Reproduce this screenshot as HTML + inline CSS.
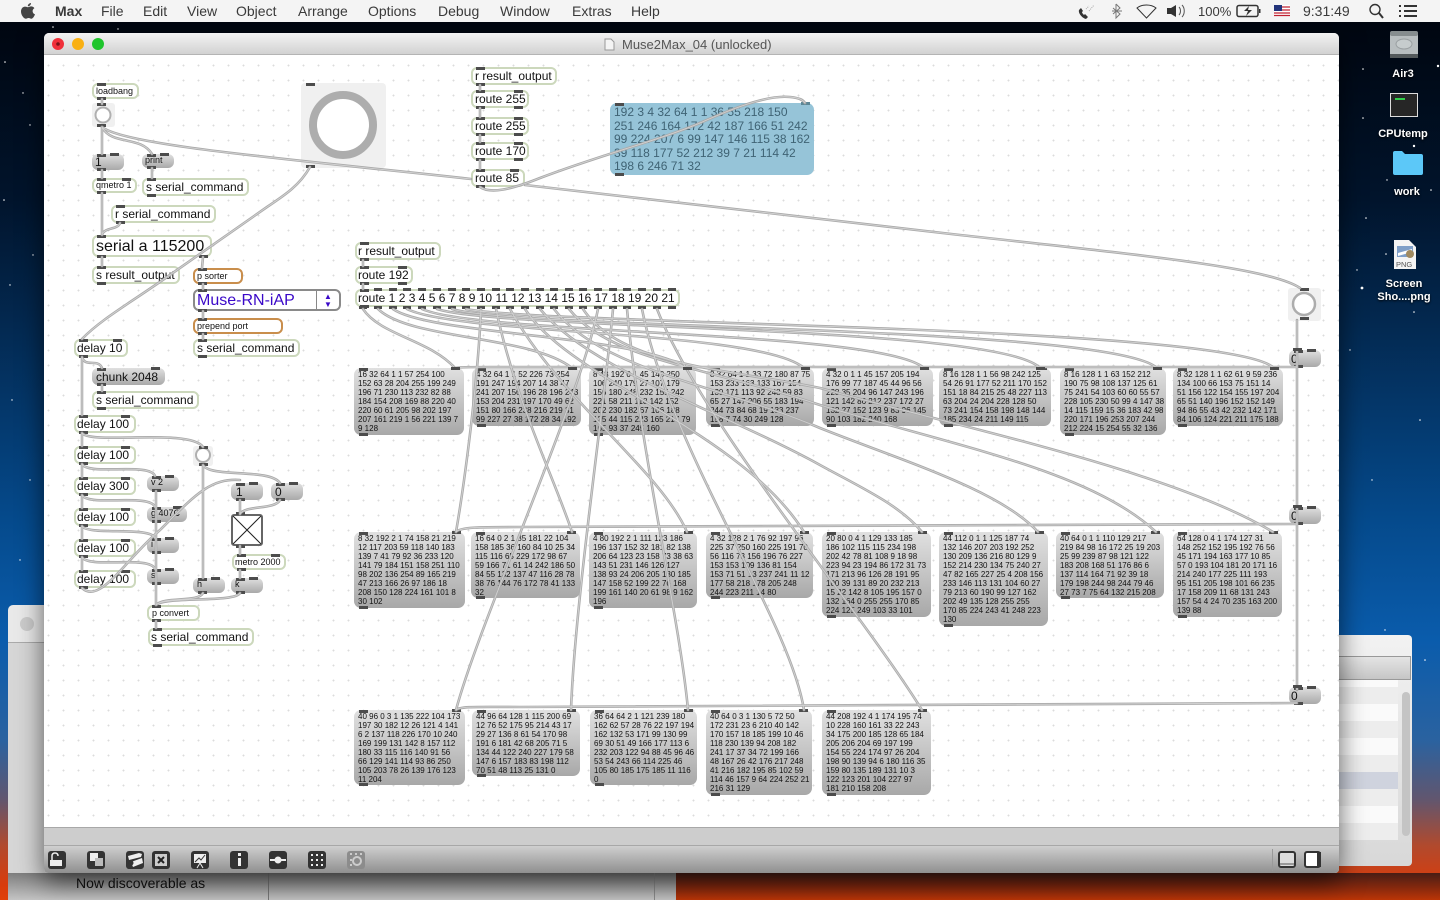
<!DOCTYPE html>
<html><head><meta charset="utf-8"><title>Muse2Max_04</title>
<style>
html,body{margin:0;padding:0;width:1440px;height:900px;overflow:hidden;font-family:"Liberation Sans",sans-serif}
#bg{position:absolute;left:0;top:0;width:1440px;height:900px;background:linear-gradient(180deg,#000610 22px,#01142c 200px,#03284f 320px,#054a8c 520px,#0a5cac 640px,#2a62a0 740px,#62566e 800px,#b04a2e 845px,#d83c0c 885px,#e04008 900px)}
#menu{position:absolute;left:0;top:0;width:1440px;height:22px;background:#f4f4f4;font-size:14px;color:#3a3a3a}
#menu span{position:absolute;top:3px;line-height:17px;white-space:nowrap}
.dt{position:absolute;color:#fff;font-weight:bold;font-size:11px;text-align:center;line-height:13px;text-shadow:0 1px 2px #000;white-space:nowrap}
#bw1{position:absolute;left:8px;top:605px;width:668px;height:295px;background:#e9e9e9;border-radius:5px 5px 0 0}
#bw1 .l{position:absolute;left:0;top:37px;width:100%;height:1px;background:#aaa}
#bw1 .c{position:absolute;left:12px;top:12px;width:14px;height:14px;border-radius:50%;background:#ccc}
#bw1 .lo{position:absolute;left:0;top:38px;width:100%;height:257px;background:#d6d6d6}
#bw2{position:absolute;left:1300px;top:635px;width:112px;height:231px;background:linear-gradient(#f2f2f2,#d8d8d8);border-radius:0 4px 4px 0}
#shade{position:absolute;left:8px;top:873px;width:668px;height:27px;background:linear-gradient(#7e7e7e,#c4c4c4)}
#orshade{position:absolute;left:676px;top:873px;width:764px;height:27px;background:linear-gradient(rgba(40,20,20,.8),rgba(40,10,0,.2))}
#win{position:absolute;left:44px;top:33px;width:1295px;height:840px;background:#fff;border-radius:5px 5px 4px 4px;box-shadow:0 8px 26px rgba(0,0,0,.6);overflow:hidden}
#tb{position:absolute;left:0;top:0;width:1295px;height:22px;background:linear-gradient(#f3f3f3,#d2d2d2);border-bottom:1px solid #b4b4b4;box-sizing:border-box}
#tb div.t{position:absolute;left:578px;top:3px;font-size:13px;line-height:17px;color:#555}
#cv{position:absolute;left:0;top:22px;width:1295px;height:772px;background-color:#fff;background-image:radial-gradient(circle,#dcdcdc .8px,rgba(255,255,255,0) 1.1px);background-size:15px 15px;background-position:-3px 3px}
#bar1{position:absolute;left:0;top:794px;width:1295px;height:19px;background:#cdcdcd;border-top:1px solid #a8a8a8;border-bottom:1px solid #a8a8a8;box-sizing:border-box}
#bar2{position:absolute;left:0;top:813px;width:1295px;height:27px;background:linear-gradient(#cfcfcf,#8f8f8f 100%)}
#obj{position:absolute;left:0;top:0;width:1440px;height:900px}
.o,.m{position:absolute;box-sizing:border-box;white-space:nowrap;color:#111}
.o{background:#fff;border:2px solid #ccd8bc;border-radius:6px;font-size:12px;padding-left:2px}
.m{background:linear-gradient(#e0e0e0,#a9a9a9);border-radius:6px;font-size:12px;padding-left:4px}
.o::before,.m::before{content:"";position:absolute;left:3px;top:-2px;width:9px;height:3px;background:#4c4c4c}
.o::after,.m::after{content:"";position:absolute;left:3px;bottom:-3px;width:9px;height:3px;background:#4c4c4c}
.m::before{left:5px;top:0}.m::after{left:5px;bottom:-1px}
.o i,.m i{position:absolute;width:9px;height:3px;background:#4c4c4c;display:block}
.s{font-size:9px}
.p1{padding-left:1px}
.n{font-size:8px;line-height:9px;padding:2px 0 0 4px;color:#111;background:linear-gradient(#e0e0e0,#a8a8a8);border-radius:7px}
.n i{right:4px;top:-1px}
#ov{position:absolute;left:0;top:0}
</style></head><body>
<div id="bg"></div>
<svg style="position:absolute;left:0;top:0" width="1440" height="900" fill="#fff">
<circle cx="53" cy="27" r=".8"/><circle cx="118" cy="29" r=".7"/><circle cx="5" cy="62" r=".8"/><circle cx="23" cy="93" r=".7"/><circle cx="30" cy="125" r=".7"/><circle cx="4" cy="200" r=".8"/><circle cx="33" cy="255" r=".7"/><circle cx="10" cy="285" r=".7"/><circle cx="1363" cy="69" r=".8"/><circle cx="1438" cy="66" r="1.2"/><circle cx="1363" cy="118" r=".8"/><circle cx="1414" cy="146" r="1.2"/><circle cx="1387" cy="180" r=".7"/><circle cx="1431" cy="190" r=".8"/><circle cx="1366" cy="218" r=".8"/><circle cx="1386" cy="254" r=".8"/><circle cx="1357" cy="270" r=".7"/><circle cx="1362" cy="288" r="1.4"/><circle cx="1414" cy="312" r=".8"/><circle cx="1350" cy="350" r=".7"/><circle cx="1420" cy="420" r=".8"/><circle cx="1372" cy="480" r=".7"/><circle cx="12" cy="400" r=".7"/><circle cx="30" cy="480" r=".7"/><circle cx="20" cy="560" r=".7"/><circle cx="1425" cy="660" r=".8"/><circle cx="1385" cy="630" r=".7"/>
</svg>
<div id="bw1"><div class="c"></div><div class="lo"></div><div class="l"></div></div>
<div id="shade"></div>
<div style="position:absolute;left:268px;top:873px;width:1px;height:27px;background:#777"></div>
<div style="position:absolute;left:654px;top:873px;width:1px;height:27px;background:#888"></div>
<div id="orshade"></div>
<div style="position:absolute;left:76px;top:875px;font-size:14px;line-height:17px;color:#111;white-space:nowrap">Now discoverable as</div>
<div id="bw2">
<div style="position:absolute;left:0;top:21px;width:111px;height:24px;background:linear-gradient(#e4e4e4,#c6c6c6);border:1px solid #999;border-width:1px 1px 1px 0;box-sizing:border-box"></div>
<div style="position:absolute;left:0;top:45px;width:98px;height:160px;background:#fafafa"></div>
<div style="position:absolute;left:0;top:52px;width:98px;height:153px;background:repeating-linear-gradient(#ededed 0,#ededed 17px,#fafafa 17px,#fafafa 34px)"></div>
<div style="position:absolute;left:0;top:137px;width:98px;height:17px;background:#cfd3de"></div>
<div style="position:absolute;left:102px;top:57px;width:8px;height:144px;border-radius:4px;background:#c4c4c4"></div>
</div>
<div id="win">
<div id="tb">
<svg style="position:absolute;left:0;top:0" width="600" height="22">
<circle cx="14" cy="11" r="6" fill="#f0303a"/><circle cx="14" cy="11" r="1.8" fill="#7a1218"/><circle cx="34" cy="11" r="6" fill="#f9b013"/><circle cx="54" cy="11" r="6" fill="#1fc52c"/>
<path d="M561 6h6l3 3v8h-9z" fill="#f4f4f4" stroke="#999"/>
</svg>
<div class="t">Muse2Max_04 (unlocked)</div></div>
<div id="cv"></div>
<div id="bar1"></div><div id="bar2"></div>
</div>
<div id="menu">
<svg style="position:absolute;left:20px;top:2px" width="16" height="18" viewBox="0 0 16 18"><path fill="#444" d="M11 1c0 2-1.6 3.4-3.2 3.3C7.700 2.600 9.300 1.100 11 1zM8 5.200c.9 0 1.800-.8 3.200-.8 1.200 0 2.500.6 3.200 1.700-2.700 1.600-2.200 5.300.6 6.300-.7 1.800-2.100 4.300-3.600 4.300-1 0-1.500-.7-2.800-.7s-1.800.7-2.800.7C3.800 16.700 1 13 1 9.500 1 6.400 3 4.600 5 4.600c1.300 0 2.200.6 3 .6z"/></svg>
<span style="left:55px;font-weight:bold">Max</span><span style="left:101px">File</span><span style="left:143px">Edit</span><span style="left:187px">View</span><span style="left:236px">Object</span><span style="left:298px">Arrange</span><span style="left:368px">Options</span><span style="left:438px">Debug</span><span style="left:500px">Window</span><span style="left:572px">Extras</span><span style="left:631px">Help</span>
<span style="left:1198px;font-size:13px">100%</span><span style="left:1303px">9:31:49</span>
<svg style="position:absolute;left:1070px;top:0" width="370" height="22" fill="none" stroke="#333">
<path d="M9 10c-1 3 3 8 7 9l2-2-3-3-1 1c-1-1-2-2-2-3l1-1-2-3z" fill="#333" stroke="none"/><path d="M16 9l3-3M19 11l5-6" stroke="#aaa" stroke-dasharray="1 1"/>
<path d="M46 4v14l4-4-7-6M46 4l4 4-7 6M42 11h10" stroke="#777"/>
<path d="M67 8c5-4 14-4 19 0l-9.500 10z" stroke="#333" fill="none"/>
<path d="M97 8h4l5-3v12l-5-3h-4z" fill="#333" stroke="none"/><path d="M109 7c2 2 2 6 0 8M112 5c3 3 3 9 0 12" stroke="#555"/>
<rect x="167" y="5.500" width="21" height="11" rx="2" stroke="#333" stroke-width="1.500"/><path d="M179 6l-5 5h4l-2 5 6-6h-4z" fill="#333" stroke="none"/><rect x="189" y="9" width="1.500" height="4" fill="#333" stroke="none"/>
<rect x="204" y="5" width="16" height="11" fill="#fff" stroke="none"/><path d="M204 7h16M204 10h16M204 13h16M204 15.500h16" stroke="#c02030" stroke-width="1.300"/><rect x="204" y="5" width="8" height="6" fill="#22337a" stroke="none"/>
<circle cx="305" cy="9.500" r="5" stroke-width="1.400"/><path d="M309 13l4 5" stroke-width="2"/>
<path d="M329 6h2M329 11h2M329 16h2M334 6h13M334 11h13M334 16h13" stroke-width="2"/>
</svg>
</div>
<svg style="position:absolute;left:1389px;top:29px" width="32" height="32"><rect x="1" y="2" width="28" height="27" rx="3" fill="#b8bec0"/><rect x="1" y="2" width="28" height="5" rx="2" fill="#868d8f"/><ellipse cx="15" cy="15" rx="8" ry="5" fill="#c6cccd" stroke="#9aa0a2"/><rect x="1" y="25" width="28" height="4" fill="#545a5c"/></svg>
<div class="dt" style="left:1383px;top:68px;width:40px">Air3</div>
<div style="position:absolute;left:1390px;top:93px;width:28px;height:24px;background:#262626;border:1px solid #ddd;box-sizing:border-box"><div style="margin:4px;width:10px;height:2px;background:#2fce4a"></div></div>
<div class="dt" style="left:1373px;top:127px;width:60px;margin-top:1px">CPUtemp</div>
<svg style="position:absolute;left:1392px;top:150px" width="32" height="26"><path d="M1 3q0-2 2-2h7l3 3h16q2 0 2 2v17q0 2-2 2H3q-2 0-2-2z" fill="#5cc8f8"/></svg>
<div class="dt" style="left:1387px;top:186px;width:40px">work</div>
<svg style="position:absolute;left:1393px;top:239px" width="24" height="31"><path d="M1 1h15l7 7v22H1z" fill="#f4f4f4"/><rect x="4" y="7" width="16" height="11" fill="#7f9fc8"/><path d="M5 14l14-4v3L5 17z" fill="#fff"/><circle cx="17" cy="15" r="4" fill="#a08a60"/><text x="3" y="28" font-size="7.500" font-family="Liberation Sans" fill="#555">PNG</text></svg>
<div class="dt" style="left:1374px;top:278px;width:60px">Screen<br>Sho....png</div>

<div id="obj">
<div class="o s" style="left:92px;top:83px;width:47px;height:16px;line-height:12px">loadbang</div>
<div class="m" style="left:92px;top:154px;width:32px;height:16px;line-height:17px;font-size:12px;padding-left:3px"><i style="right:5px;top:-1px"></i>1</div>
<div class="m s" style="left:142px;top:154px;width:32px;height:14px;line-height:12px;padding-left:3px;font-size:9px"><i style="right:5px;top:-1px"></i>print</div>
<div class="o s" style="left:92px;top:178px;width:45px;height:15px;line-height:11px"><i style="right:4px;top:-2px"></i>qmetro 1</div>
<div class="o" style="left:142px;top:178px;width:107px;height:18px;line-height:14px">s serial_command</div>
<div class="o" style="left:111px;top:205px;width:105px;height:18px;line-height:14px">r serial_command</div>
<div class="o" style="left:92px;top:235px;width:120px;height:22px;line-height:19px;font-size:16px"><i style="left:105px;top:18px"></i>serial a 115200</div>
<div class="o" style="left:92px;top:266px;width:88px;height:18px;line-height:14px">s result_output</div>
<div class="o s" style="left:193px;top:268px;width:50px;height:16px;line-height:12px;border-color:#c98e4c">p sorter</div>
<div class="o" style="left:193px;top:289px;width:148px;height:22px;line-height:19px;font-size:16px;color:#3a08c8;border-color:#8a8a8a">Muse-RN-iAP<div style="position:absolute;left:121px;top:0;width:1px;height:18px;background:#888"></div><div style="position:absolute;left:129px;top:2px;font-size:8px;line-height:7px;color:#3a08c8">▲</div><div style="position:absolute;left:129px;top:10px;font-size:8px;line-height:7px;color:#3a08c8">▼</div></div>
<div class="o s" style="left:193px;top:318px;width:90px;height:16px;line-height:12px;border-color:#c98e4c">prepend port</div>
<div class="o" style="left:193px;top:339px;width:107px;height:18px;line-height:14px">s serial_command</div>
<div class="o p1" style="left:74px;top:339px;width:54px;height:18px;line-height:14px"><i style="right:4px;top:-2px"></i>delay 10</div>
<div class="m" style="left:92px;top:368px;width:73px;height:17px;line-height:18px"><i style="right:5px;top:-1px"></i>chunk 2048</div>
<div class="o" style="left:92px;top:391px;width:107px;height:18px;line-height:14px">s serial_command</div>
<div class="o p1" style="left:74px;top:415px;width:62px;height:18px;line-height:14px"><i style="right:4px;top:-2px"></i>delay 100</div>
<div class="o p1" style="left:74px;top:446px;width:62px;height:18px;line-height:14px"><i style="right:4px;top:-2px"></i>delay 100</div>
<div class="o p1" style="left:74px;top:477px;width:62px;height:18px;line-height:14px"><i style="right:4px;top:-2px"></i>delay 300</div>
<div class="o p1" style="left:74px;top:508px;width:62px;height:18px;line-height:14px"><i style="right:4px;top:-2px"></i>delay 100</div>
<div class="o p1" style="left:74px;top:539px;width:62px;height:18px;line-height:14px"><i style="right:4px;top:-2px"></i>delay 100</div>
<div class="o p1" style="left:74px;top:570px;width:62px;height:18px;line-height:14px"><i style="right:4px;top:-2px"></i>delay 100</div>
<div class="m s" style="left:147px;top:476px;width:32px;height:15px;line-height:13px;font-size:9px;padding-left:4px"><i style="right:5px;top:-1px"></i>v 2</div>
<div class="m s" style="left:147px;top:507px;width:40px;height:15px;line-height:13px;font-size:9px;padding-left:4px"><i style="right:5px;top:-1px"></i>g 407C</div>
<div class="m s" style="left:147px;top:538px;width:32px;height:15px;line-height:13px;font-size:9px;padding-left:4px"><i style="right:5px;top:-1px"></i>i</div>
<div class="m s" style="left:147px;top:569px;width:32px;height:15px;line-height:13px;font-size:9px;padding-left:4px"><i style="right:5px;top:-1px"></i>s</div>
<div class="m" style="left:231px;top:483px;width:32px;height:17px;line-height:18px;padding-left:5px"><i style="right:5px;top:-1px"></i>1</div>
<div class="m" style="left:271px;top:483px;width:32px;height:17px;line-height:18px;padding-left:4px"><i style="right:5px;top:-1px"></i>0</div>
<div class="o s p1" style="left:232px;top:554px;width:54px;height:16px;line-height:12px"><i style="right:4px;top:-2px"></i>metro 2000</div>
<div class="m s" style="left:193px;top:578px;width:32px;height:15px;line-height:13px;font-size:9px;padding-left:4px"><i style="right:5px;top:-1px"></i>h</div>
<div class="m s" style="left:231px;top:578px;width:32px;height:15px;line-height:13px;font-size:9px;padding-left:4px"><i style="right:5px;top:-1px"></i>k</div>
<div class="o s" style="left:147px;top:605px;width:53px;height:16px;line-height:12px;padding-left:3px">p convert</div>
<div class="o p1" style="left:148px;top:628px;width:106px;height:18px;line-height:14px">s serial_command</div>
<div class="o" style="left:471px;top:67px;width:86px;height:18px;line-height:14px">r result_output</div>
<div class="o" style="left:471px;top:90px;width:58px;height:18px;line-height:14px"><i style="right:4px;top:-2px"></i><i style="right:4px;bottom:-3px"></i>route 255</div>
<div class="o" style="left:471px;top:117px;width:58px;height:18px;line-height:14px"><i style="right:4px;top:-2px"></i><i style="right:4px;bottom:-3px"></i>route 255</div>
<div class="o" style="left:471px;top:142px;width:58px;height:18px;line-height:14px"><i style="right:4px;top:-2px"></i><i style="right:4px;bottom:-3px"></i>route 170</div>
<div class="o" style="left:471px;top:169px;width:54px;height:18px;line-height:14px"><i style="right:4px;top:-2px"></i>route 85</div>
<div class="o p1" style="left:355px;top:242px;width:86px;height:18px;line-height:14px">r result_output</div>
<div class="o p1" style="left:355px;top:266px;width:58px;height:18px;line-height:14px"><i style="right:4px;top:-2px"></i><i style="right:4px;bottom:-3px"></i>route 192</div>
<div class="o p1" style="left:355px;top:289px;width:325px;height:18px;line-height:14px">route 1 2 3 4 5 6 7 8 9 10 11 12 13 14 15 16 17 18 19 20 21</div>

<div class="m" style="left:610px;top:103px;width:204px;height:72px;background:#96c4d8;font-size:12px;line-height:13.500px;padding:3px 0 0 4px;color:#3f6374;border-radius:7px"><i style="right:4px;top:-1px;background:#5d8796"></i>192 3 4 32 64 1 1 36 55 218 150<br>251 246 164 172 42 187 166 51 242<br>99 224 207 6 99 147 146 115 38 162<br>39 118 177 52 212 39 7 21 114 42<br>198 6 246 71 32</div>

<div class="m n" style="left:354px;top:368px;width:110px;height:67px"><i></i>16 32 64 1 1 57 254 100<br>152 63 28 204 255 199 249<br>196 71 230 113 232 82 88<br>184 154 208 169 88 220 40<br>220 60 61 205 98 202 197<br>207 161 219 1 56 221 139 7<br>9 128</div>
<div class="m n" style="left:472px;top:368px;width:109px;height:58px"><i></i>4 32 64 1 1 52 226 73 254<br>191 247 194 207 14 38 47<br>241 207 156 196 28 196 243<br>153 204 231 197 170 49 62<br>151 80 166 238 216 219 31<br>99 227 27 38 172 28 34 192</div>
<div class="m n" style="left:589px;top:368px;width:107px;height:67px"><i></i>8 48 192 0 1 45 140 250<br>106 240 179 27 107 179<br>156 180 248 232 155 242<br>221 58 211 118 142 152<br>202 230 182 67 106 188<br>125 44 115 223 165 217 79<br>165 93 37 245 160</div>
<div class="m n" style="left:706px;top:368px;width:108px;height:58px"><i></i>8 32 64 1 1 33 72 180 87 75<br>153 233 163 133 167 154<br>130 171 113 92 248 59 83<br>65 27 147 206 55 183 194<br>244 73 84 68 19 133 237<br>158 7 74 30 249 128</div>
<div class="m n" style="left:822px;top:368px;width:111px;height:58px"><i></i>4 32 0 1 1 45 157 205 194<br>176 99 77 187 45 44 96 56<br>228 35 204 96 147 243 196<br>121 142 86 212 237 172 27<br>132 27 152 123 9 83 96 145<br>90 103 182 240 168</div>
<div class="m n" style="left:939px;top:368px;width:112px;height:58px"><i></i>8 16 128 1 1 56 98 242 125<br>54 26 91 177 52 211 170 152<br>151 18 84 215 25 48 227 113<br>63 204 24 204 228 128 50<br>73 241 154 158 198 148 144<br>185 234 24 211 149 115</div>
<div class="m n" style="left:1060px;top:368px;width:106px;height:67px"><i></i>8 16 128 1 1 63 152 212<br>190 75 98 108 137 125 61<br>75 241 54 103 60 60 55 57<br>228 105 230 50 99 4 147 38<br>14 115 159 15 36 183 42 98<br>220 171 196 253 207 244<br>212 224 15 254 55 32 136</div>
<div class="m n" style="left:1173px;top:368px;width:110px;height:58px"><i></i>8 32 128 1 1 62 61 9 59 236<br>134 100 66 153 75 151 14<br>51 156 122 154 155 197 204<br>65 51 140 196 152 152 149<br>94 86 55 43 42 232 142 171<br>84 106 124 221 211 175 188</div>

<div class="m n" style="left:354px;top:532px;width:111px;height:76px"><i></i>8 32 192 2 1 74 158 21 219<br>12 117 203 59 118 140 183<br>139 7 41 79 92 36 233 120<br>141 79 184 151 158 251 110<br>98 202 136 254 89 165 219<br>47 213 166 26 97 186 18<br>208 150 128 224 161 101 8<br>30 102</div>
<div class="m n" style="left:471px;top:532px;width:109px;height:66px"><i></i>16 64 0 2 1 85 181 22 104<br>158 185 36 160 84 10 25 34<br>115 116 65 229 172 98 67<br>59 166 71 61 14 242 186 50<br>84 55 132 137 47 116 28 78<br>38 76 144 76 172 78 41 133<br>32</div>
<div class="m n" style="left:589px;top:532px;width:108px;height:76px"><i></i>4 80 192 2 1 111 123 186<br>196 137 152 32 181 82 138<br>206 64 123 23 158 73 38 63<br>143 51 231 146 126 127<br>138 93 24 206 205 130 185<br>147 158 52 199 22 76 168<br>199 161 140 20 61 98 9 162<br>196</div>
<div class="m n" style="left:706px;top:532px;width:107px;height:66px"><i></i>4 32 128 2 1 76 92 197 96<br>225 37 250 160 225 191 70<br>56 116 73 156 196 76 227<br>153 153 109 136 81 154<br>153 71 51 13 237 241 11 12<br>177 58 218 178 205 248<br>244 223 211 14 80</div>
<div class="m n" style="left:822px;top:532px;width:109px;height:85px"><i></i>20 80 0 4 1 129 133 185<br>186 102 115 115 234 198<br>202 42 78 81 108 9 18 98<br>223 94 23 194 86 172 31 73<br>171 213 96 126 28 191 95<br>100 39 131 89 20 232 213<br>15 22 142 8 105 195 157 0<br>132 164 0 255 255 170 85<br>224 125 249 103 33 101</div>
<div class="m n" style="left:939px;top:532px;width:109px;height:94px"><i></i>44 112 0 1 1 125 187 74<br>132 146 207 203 192 252<br>130 209 136 216 80 129 9<br>152 214 230 134 75 240 27<br>47 82 165 227 25 4 208 156<br>233 146 113 131 104 60 27<br>79 213 60 190 99 127 162<br>202 49 135 128 255 255<br>170 85 224 243 41 248 223<br>130</div>
<div class="m n" style="left:1056px;top:532px;width:108px;height:66px"><i></i>40 64 0 1 1 110 129 217<br>219 84 98 16 172 25 19 203<br>25 99 239 87 98 121 122<br>183 208 168 51 176 86 6<br>137 114 164 71 92 39 18<br>179 198 244 98 244 79 46<br>27 73 7 75 64 132 215 208</div>
<div class="m n" style="left:1173px;top:532px;width:109px;height:85px"><i></i>64 128 0 4 1 174 127 31<br>148 252 152 195 192 76 56<br>45 171 194 163 177 10 85<br>57 0 193 104 181 20 171 16<br>214 240 177 225 111 193<br>95 151 205 198 101 66 235<br>17 158 209 11 68 131 243<br>157 54 4 24 70 235 163 200<br>139 88</div>

<div class="m n" style="left:354px;top:710px;width:111px;height:75px"><i></i>40 96 0 3 1 135 222 104 173<br>197 30 182 12 26 121 4 141<br>6 2 137 118 226 170 10 240<br>169 199 131 142 8 157 112<br>180 33 115 116 140 91 56<br>66 129 141 114 93 86 250<br>105 203 78 26 139 176 123<br>11 204</div>
<div class="m n" style="left:472px;top:710px;width:108px;height:66px"><i></i>44 96 64 128 1 115 200 69<br>12 76 52 175 95 214 43 17<br>29 27 136 8 61 54 170 98<br>191 6 181 42 68 205 71 5<br>134 44 122 240 227 179 58<br>147 6 157 183 83 198 112<br>70 51 48 113 25 131 0</div>
<div class="m n" style="left:590px;top:710px;width:107px;height:75px"><i></i>36 64 64 2 1 121 239 180<br>162 62 57 28 76 22 197 194<br>162 132 53 171 99 130 99<br>69 30 51 49 166 177 113 6<br>232 203 122 94 88 45 96 46<br>53 54 243 66 114 225 46<br>105 80 185 175 185 11 116<br>0</div>
<div class="m n" style="left:706px;top:710px;width:106px;height:85px"><i></i>40 64 0 3 1 130 5 72 50<br>172 231 23 6 210 40 142<br>170 157 18 185 199 10 46<br>118 230 139 94 208 182<br>241 17 37 34 72 199 166<br>48 167 26 42 176 217 248<br>41 216 182 195 85 102 59<br>114 46 157 9 64 224 252 21<br>216 31 129</div>
<div class="m n" style="left:822px;top:710px;width:109px;height:85px"><i></i>44 208 192 4 1 174 195 74<br>10 228 160 161 33 22 243<br>34 175 200 185 128 65 184<br>205 206 204 69 197 199<br>154 55 224 174 97 26 204<br>198 90 139 94 6 180 116 35<br>159 80 135 189 131 10 3<br>122 123 201 104 227 97<br>181 210 158 208</div>

<div class="m" style="left:1289px;top:350px;width:32px;height:17px;line-height:18px;padding-left:2px"><i style="right:5px;top:-1px"></i>0</div>
<div class="m" style="left:1289px;top:507px;width:32px;height:17px;line-height:18px;padding-left:2px"><i style="right:5px;top:-1px"></i>0</div>
<div class="m" style="left:1289px;top:687px;width:32px;height:17px;line-height:18px;padding-left:2px"><i style="right:5px;top:-1px"></i>0</div>
</div>

<svg id="ov" width="1440" height="900">
<defs><g id="cab">
<path d="M102 99V104M102 127V154M102 170V178M102 193V235M102 257V266M203 257L202 268M203 284V289M203 311V318M203 334V339M152 168V178M120 223C118 230 104 227 102 235"/>
<path d="M102 127C112 146 140 135 152 154"/>
<path d="M102 127C125 146 300 160 471 179M525 185L960 235C1150 256 1270 268 1300 288"/>
<path d="M310 167C300 185 285 195 267 207L167 277C130 303 100 320 82 339"/>
<path d="M82 357V415M82 433V446M82 464V477M82 495V508M82 526V539M82 557V570M82 357C85 368 98 358 102 368M102 385V391"/>
<path d="M82 433C90 445 190 428 203 447"/>
<path d="M82 464C88 476 150 462 155 476M82 495C88 507 150 493 155 507M82 526C88 536 150 526 155 538M82 557C88 569 150 555 155 569"/>
<path d="M156 491V605M203 465V578M156 621V628"/>
<path d="M203 465C210 478 270 468 280 483"/>
<path d="M240 500V514M280 500C275 510 245 505 240 514M240 546V554M240 570V578"/>
<path d="M203 593C198 603 165 596 156 605M240 593C235 603 165 596 156 605"/>
<path d="M82 588C100 605 125 560 160 530C195 495 210 478 240 480"/>
<path d="M480 85V90M480 108V117M480 135V142M480 160V169"/>
<path d="M480 187C490 194 510 190 540 178C600 155 660 140 700 123C740 105 770 95 790 97C800 98 803 100 805 103"/>
<path d="M363 260V266M363 284V289"/>
<path d="M363 309C380 335 430 340 455 368"/>
<path d="M378 309C410 340 530 335 572 368"/>
<path d="M393 309C430 335 640 335 686 368"/>
<path d="M407 309C460 335 760 330 804 368"/>
<path d="M422 309C480 335 880 330 924 368"/>
<path d="M437 309C500 330 1000 325 1040 368"/>
<path d="M452 309C520 330 1110 325 1157 368"/>
<path d="M466 309C540 325 1230 325 1274 368"/>
<path d="M481 309C478 380 465 480 456 532"/>
<path d="M496 309C515 400 555 480 572 532"/>
<path d="M510 309C560 400 660 470 687 532"/>
<path d="M525 309C570 380 740 430 804 532"/>
<path d="M540 309C590 370 720 410 820 465C860 487 900 505 922 532"/>
<path d="M554 309C600 370 720 385 820 428C900 460 1000 490 1038 532"/>
<path d="M569 309C610 360 700 365 820 405C950 445 1090 470 1156 532"/>
<path d="M583 309C620 365 720 368 820 388C950 425 1170 470 1273 532"/>
<path d="M598 309C580 400 480 620 456 710"/>
<path d="M613 309C605 400 575 600 571 710"/>
<path d="M627 309C640 450 680 620 688 710"/>
<path d="M642 309C670 450 790 620 804 710"/>
<path d="M657 309C700 420 860 610 922 710"/>
<path d="M1297 320V690"/>
<path d="M455 368C458 367 470 367 490 367H1297"/>
<path d="M456 532C460 527 480 527 520 527L1297 524"/>
<path d="M456 710C460 706 480 707 520 707L1297 703"/>
</g></defs>
<!-- buttons and toggle -->
<rect x="92" y="103" width="23" height="24" rx="3" fill="#f0f0f0"/><circle cx="103" cy="115" r="7.500" fill="#fff" stroke="#b0b0b0" stroke-width="2"/>
<rect x="301" y="83" width="85" height="85" rx="4" fill="#f0f0f0"/><circle cx="343" cy="125" r="30" fill="#fff" stroke="#adadad" stroke-width="8"/>
<rect x="193" y="446" width="20" height="20" rx="3" fill="#f0f0f0"/><circle cx="203" cy="455" r="7" fill="#fff" stroke="#b0b0b0" stroke-width="2"/>
<rect x="1288" y="288" width="33" height="33" rx="3" fill="#f0f0f0"/><circle cx="1304" cy="304" r="11" fill="#fff" stroke="#adadad" stroke-width="2.500"/>
<rect x="232" y="515" width="30" height="30" rx="2" fill="#fff" stroke="#666" stroke-width="2"/><path d="M233 516l28 28M261 516l-28 28" stroke="#222" stroke-width="1"/>
<!-- port bars -->
<g fill="#4c4c4c">
<rect x="97" y="103" width="9" height="3"/><rect x="97" y="124" width="9" height="3"/>
<rect x="306" y="83" width="9" height="3"/><rect x="306" y="165" width="9" height="3"/>
<rect x="199" y="446" width="9" height="3"/><rect x="199" y="463" width="9" height="3"/>
<rect x="236" y="512" width="9" height="3"/><rect x="236" y="545" width="9" height="3"/>
<rect x="1300" y="288" width="9" height="3"/><rect x="1300" y="317" width="9" height="3"/>
<path d="M359 306h8v3h-8zM374 306h8v3h-8zM389 306h8v3h-8zM403 306h8v3h-8zM418 306h8v3h-8zM433 306h8v3h-8zM448 306h8v3h-8zM462 306h8v3h-8zM477 306h8v3h-8zM492 306h8v3h-8zM506 306h8v3h-8zM521 306h8v3h-8zM536 306h8v3h-8zM550 306h8v3h-8zM565 306h8v3h-8zM579 306h8v3h-8zM594 306h8v3h-8zM609 306h8v3h-8zM623 306h8v3h-8zM638 306h8v3h-8zM653 306h8v3h-8zM668 306h8v3h-8z"/>
<path d="M374 288h8v3h-8zM389 288h8v3h-8zM403 288h8v3h-8zM418 288h8v3h-8zM433 288h8v3h-8zM448 288h8v3h-8zM462 288h8v3h-8zM477 288h8v3h-8zM492 288h8v3h-8zM506 288h8v3h-8zM521 288h8v3h-8zM536 288h8v3h-8zM550 288h8v3h-8zM565 288h8v3h-8zM579 288h8v3h-8zM594 288h8v3h-8zM609 288h8v3h-8zM623 288h8v3h-8zM638 288h8v3h-8zM653 288h8v3h-8zM668 288h8v3h-8z"/>
</g>
<!-- cables: grey casing with lighter core -->
<use href="#cab" fill="none" stroke="#aaaaaa" stroke-width="2.600" stroke-linecap="round"/>
<use href="#cab" fill="none" stroke="#d2d2d2" stroke-width=".9"/>
<g fill="#4c4c4c">
<rect x="451" y="367" width="9" height="3"/><rect x="568" y="367" width="9" height="3"/><rect x="683" y="367" width="9" height="3"/><rect x="801" y="367" width="9" height="3"/><rect x="920" y="367" width="9" height="3"/><rect x="1036" y="367" width="9" height="3"/><rect x="1153" y="367" width="9" height="3"/><rect x="1270" y="367" width="9" height="3"/>
<rect x="1293" y="348" width="9" height="3"/><rect x="1293" y="505" width="9" height="3"/><rect x="1293" y="685" width="9" height="3"/>
</g>
<!-- toolbar icons -->
<g fill="#333">
<rect x="48" y="851" width="18" height="18" rx="3"/><rect x="87" y="851" width="18" height="18" rx="3"/><rect x="126" y="851" width="18" height="18" rx="3"/><rect x="152" y="851" width="18" height="18" rx="3"/><rect x="191" y="851" width="18" height="18" rx="3"/><rect x="230" y="851" width="18" height="18" rx="3"/><rect x="269" y="851" width="18" height="18" rx="3"/><rect x="308" y="851" width="18" height="18" rx="3"/><rect x="347" y="851" width="18" height="18" rx="3" fill="#8c8c8c"/>
</g>
<rect x="50" y="860" width="12" height="6" fill="#eee"/><path d="M52 860v-4q0-3 3-3t3 3" fill="none" stroke="#eee" stroke-width="1.500"/>
<rect x="90" y="853" width="8" height="8" fill="#eee"/><rect x="95" y="858" width="8" height="8" fill="#bbb"/>
<path d="M128 856l11-3 3 1-1 3-12 3zM131 862l11-4 1 5-10 4z" fill="#eee"/><circle cx="131" cy="863" r="2.500" fill="#333"/>
<rect x="155" y="854" width="12" height="12" fill="#ccc"/><path d="M158 857l6 6M164 857l-6 6" stroke="#222" stroke-width="2"/>
<rect x="194" y="854" width="12" height="9" fill="#eee"/><path d="M195 862l4-4 2 2 4-5" stroke="#333" fill="none"/><path d="M200 863l-3 5M200 863l3 5" stroke="#eee"/>
<rect x="238" y="858" width="3" height="8" fill="#eee"/><rect x="238" y="853" width="3" height="3" fill="#eee"/>
<path d="M270 860h16" stroke="#eee" stroke-width="2"/><circle cx="278" cy="860" r="3.500" fill="#eee"/>
<g fill="#eee"><rect x="311" y="854" width="2" height="2"/><rect x="316" y="854" width="2" height="2"/><rect x="321" y="854" width="2" height="2"/><rect x="311" y="859" width="2" height="2"/><rect x="316" y="859" width="2" height="2"/><rect x="321" y="859" width="2" height="2"/><rect x="311" y="864" width="2" height="2"/><rect x="316" y="864" width="2" height="2"/><rect x="321" y="864" width="2" height="2"/></g>
<circle cx="357" cy="861" r="4" fill="none" stroke="#ccc" stroke-width="2"/><g fill="#ccc"><rect x="350" y="853" width="2" height="2"/><rect x="355" y="853" width="2" height="2"/><rect x="360" y="853" width="2" height="2"/><rect x="350" y="859" width="2" height="2"/><rect x="350" y="864" width="2" height="2"/></g>
<path d="M1272.500 849v22" stroke="#999"/>
<rect x="1279" y="852" width="16" height="15" rx="2" fill="#ddd" stroke="#333" stroke-width="2"/><rect x="1280" y="863" width="14" height="2" fill="#999"/>
<rect x="1305" y="852" width="15" height="15" rx="2" fill="#fff" stroke="#333" stroke-width="2"/><rect x="1317" y="852" width="4" height="15" fill="#333"/>
</svg>
</body></html>
